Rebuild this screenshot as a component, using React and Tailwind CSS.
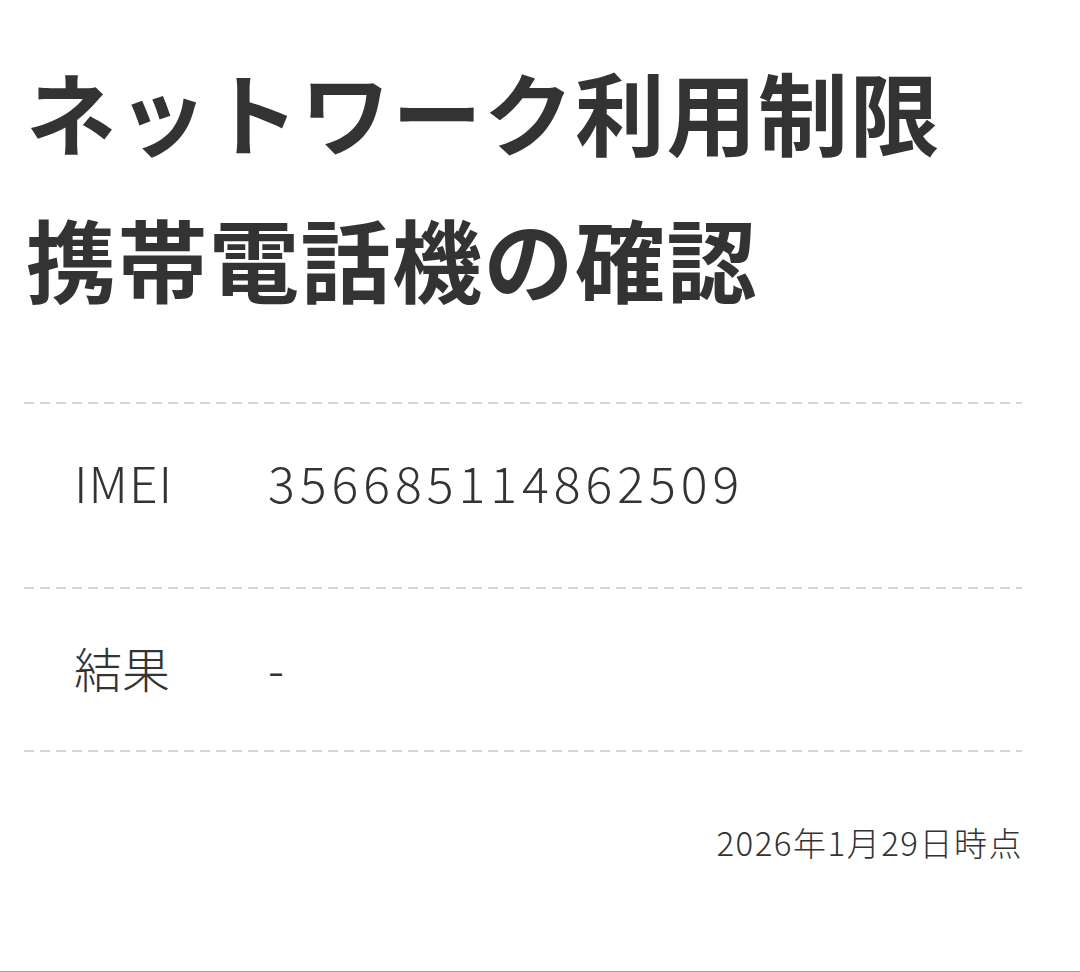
export default function App() {
  const dashed = "h-[2px] w-full bg-[repeating-linear-gradient(to_right,#d4d4d4_0px,#d4d4d4_10px,transparent_10px,transparent_16px)]";
  return (
    <div className="w-[1080px] h-[972px] bg-white flex flex-col border-b border-[#a0a0a0] text-[#333333]" style={{ fontFamily: '"Noto Sans CJK JP", "Noto Sans", sans-serif' }}>
      <div className="pl-[26px] pt-[37px]">
        <h1 className="text-[90px] leading-[147px] font-bold tracking-[1.5px]">ネットワーク利用制限<br />携帯電話機の確認</h1>
      </div>
      <div className="mt-[71px] mx-[24px] w-[998px] flex flex-col">
        <div className={dashed} />
        <div className="h-[183px] flex items-center pb-[28px] text-[50px] font-light">
          <div className="w-[244px] pl-[50px] tracking-[1px]">IMEI</div>
          <div className="tracking-[5px]">356685114862509</div>
        </div>
        <div className={dashed} />
        <div className="h-[161px] flex items-center pb-[6px] text-[48px] font-light">
          <div className="w-[244px] pl-[50px]">結果</div>
          <div>-</div>
        </div>
        <div className={dashed} />
        <div className="mt-[66px] text-right text-[33px] font-light tracking-[1.5px] -mr-[1px]">2026年1月29日時点</div>
      </div>
    </div>
  );
}
